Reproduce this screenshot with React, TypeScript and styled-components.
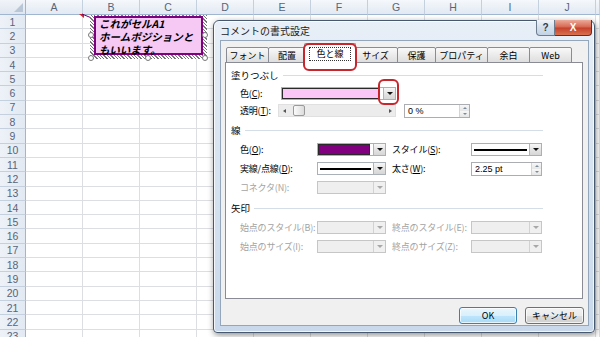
import React from 'react';
import styled, { createGlobalStyle } from 'styled-components';

const GlobalStyle = createGlobalStyle`
  *, *::before, *::after { box-sizing: border-box; }
  html, body { margin: 0; padding: 0; background: #fff; }
  body { font-family: "Noto Sans CJK JP", "Noto Sans", sans-serif; }
`;

const UI_FONT = `"Noto Sans CJK JP", "Noto Sans", sans-serif`;
const COLS = ['A', 'B', 'C', 'D', 'E', 'F', 'G', 'H', 'I', 'J', ''];
const ROWS = Array.from({ length: 23 }, (_, i) => i + 1);

// ---------- spreadsheet ----------
const Screen = styled.div`
  position: relative;
  width: 600px;
  height: 337px;
  overflow: hidden;
  background: #fff;
`;

const Sheet = styled.div`
  display: grid;
  grid-template-columns: 26px repeat(10, 57px) 1fr;
  grid-template-rows: 15px repeat(23, 14.3px);
  width: 600px;
`;

const Corner = styled.div`
  position: relative;
  background: linear-gradient(#f1f4f9, #dfe6ef);
  border-right: 1px solid #9eb6ce;
  border-bottom: 1px solid #9eb6ce;
  &::after {
    content: '';
    position: absolute;
    right: 2px;
    bottom: 2px;
    border-left: 9px solid transparent;
    border-bottom: 9px solid #b9c6d6;
  }
`;

const ColHead = styled.div`
  display: flex;
  align-items: center;
  justify-content: center;
  background: linear-gradient(#f5f8fc, #e2e9f2);
  border-right: 1px solid #c4d0de;
  border-bottom: 1px solid #9eb6ce;
  font: 10.5px "Liberation Sans", Arial, sans-serif;
  color: #56657a;
`;

const RowHead = styled.div`
  display: flex;
  align-items: center;
  justify-content: center;
  background: linear-gradient(90deg, #eef2f8, #e2e9f2);
  border-right: 1px solid #9eb6ce;
  border-bottom: 1px solid #c4d0de;
  font: 10.5px "Liberation Sans", Arial, sans-serif;
  color: #56657a;
`;

const Cell = styled.div`
  border-right: 1px solid #dcdee2;
  border-bottom: 1px solid #dcdee2;
`;

// ---------- comment ----------
const CommentFrame = styled.div`
  position: absolute;
  left: 90px;
  top: 15px;
  width: 117px;
  height: 44px;
  padding: 1px 4px 4px 4px;
  background: repeating-linear-gradient(45deg, #777 0 1px, #fff 1px 2.4px);
`;

const Note = styled.div`
  height: 100%;
  background: #f6c8f4;
  border: 2.5px solid #7d007d;
  padding: 0 0 0 3px;
  font: italic bold 10.5px/13px ${UI_FONT};
  color: #000;
  white-space: nowrap;
`;

const NoteText = styled.div`
  margin-top: -1px;
`;

const Handle = styled.span<{ $x: number; $y: number }>`
  position: absolute;
  left: ${p => p.$x - 3}px;
  top: ${p => p.$y - 3}px;
  width: 6px;
  height: 6px;
  border-radius: 50%;
  background: #fff;
  border: 1px solid #777;
`;

const Indicator = styled.svg`
  position: absolute;
  left: 78px;
  top: 13px;
`;

// ---------- dialog ----------
const Dialog = styled.div`
  position: absolute;
  left: 213px;
  top: 20px;
  width: 382px;
  height: 313px;
  display: flex;
  flex-direction: column;
  padding: 0 5px 6px 6px;
  border: 1px solid #47596e;
  border-radius: 6px 6px 4px 4px;
  background: linear-gradient(180deg, #e8eff7 0%, #dae5f1 35%, #c9d9eb 100%);
  box-shadow: 1px 2px 6px rgba(0, 0, 0, 0.45), inset 0 0 0 1px rgba(255, 255, 255, 0.75);
`;

const TitleBar = styled.div`
  display: flex;
  align-items: center;
  height: 19px;
  font: 10px ${UI_FONT};
  color: #1b1b1b;
`;

const Caption = styled.div`
  display: flex;
  align-self: flex-start;
  margin: -1px -3px 0 auto;
`;

const HelpBtn = styled.div`
  width: 19px;
  height: 16px;
  display: flex;
  align-items: center;
  justify-content: center;
  border: 1px solid #6d7d90;
  border-top: none;
  border-radius: 0 0 0 4px;
  background: linear-gradient(#f1f5fa, #d3dfec 50%, #c3d3e6);
  font: bold 10px "Liberation Sans", Arial, sans-serif;
  color: #2e3b4c;
`;

const CloseBtn = styled.div`
  width: 37px;
  height: 16px;
  display: flex;
  align-items: center;
  justify-content: center;
  border: 1px solid #6b2a22;
  border-top: none;
  border-left: none;
  border-radius: 0 0 4px 0;
  background: linear-gradient(#ecaa9a, #d6664f 48%, #c4402b 52%, #d9714f);
  font: bold 10px "Liberation Sans", Arial, sans-serif;
  color: #fff;
`;

const Client = styled.div`
  flex: 1;
  display: flex;
  flex-direction: column;
  padding: 2px 5px 0 4px;
  background: #f0f0f0;
  border: 1px solid #93a6bb;
`;

const TabStrip = styled.div`
  display: flex;
  align-items: flex-end;
  height: 20px;
  margin-left: 1px;
`;

const Tab = styled.div<{ $w: number; $active?: boolean }>`
  position: relative;
  z-index: ${p => (p.$active ? 3 : 2)};
  display: flex;
  align-items: center;
  justify-content: center;
  width: ${p => p.$w}px;
  height: ${p => (p.$active ? 20 : 16)}px;
  margin-left: ${p => (p.$active ? -2 : -1)}px;
  margin-right: ${p => (p.$active ? -2 : 0)}px;
  border: 1px solid #898c95;
  border-bottom: ${p => (p.$active ? 'none' : '1px solid #898c95')};
  border-radius: 2px 2px 0 0;
  background: ${p => (p.$active ? '#fff' : 'linear-gradient(#f9f9f9, #ebebeb 50%, #dedede)')};
  font: 9px ${UI_FONT};
  color: #000;
  &:first-child { margin-left: 0; }
`;

const FocusText = styled.span`
  padding: 0 6px;
  outline: 1px dotted #333;
  line-height: 12px;
`;

const RedMark = styled.span<{ $l: number; $t: number; $r: number; $b: number }>`
  position: absolute;
  left: ${p => p.$l}px;
  top: ${p => p.$t}px;
  right: ${p => p.$r}px;
  bottom: ${p => p.$b}px;
  border: 2px solid #c8262d;
  border-radius: 6px;
  pointer-events: none;
  z-index: 5;
`;

const Panel = styled.div`
  position: relative;
  z-index: 1;
  height: 237px;
  margin-top: -1px;
  background: #fff;
  border: 1px solid #898c95;
  padding: 5px 0 0 5px;
  font: 9px ${UI_FONT};
  color: #000;
`;

const SectionHead = styled.div<{ $mt?: number }>`
  display: flex;
  align-items: center;
  gap: 4px;
  width: 312px;
  height: 14px;
  margin-top: ${p => p.$mt ?? 0}px;
  font-size: 9.5px;
  &::after {
    content: '';
    flex: 1;
    height: 1px;
    background: #d5dde6;
  }
`;

const FillRow = styled.div<{ $mt?: number }>`
  display: grid;
  grid-template-columns: 41px 115px 8px 66px;
  align-items: center;
  height: 17px;
  margin: ${p => p.$mt ?? 0}px 0 0 9px;
`;

const LineRow = styled.div<{ $mt?: number }>`
  display: grid;
  grid-template-columns: 77px 69px 85px 71px;
  align-items: center;
  height: 19px;
  margin: ${p => p.$mt ?? 0}px 0 0 9px;
`;

const Label = styled.span<{ $disabled?: boolean; $pad?: number }>`
  white-space: nowrap;
  padding-left: ${p => p.$pad ?? 0}px;
  letter-spacing: -0.2px;
  color: ${p => (p.$disabled ? '#a3a3a3' : '#000')};
`;

const Combo = styled.div<{ $disabled?: boolean }>`
  display: flex;
  height: 13px;
  border: 1px solid ${p => (p.$disabled ? '#c6c6c6' : '#a9b0b8')};
  background: ${p => (p.$disabled ? '#efefef' : '#fff')};
`;

const Swatch = styled.div<{ $color: string }>`
  flex: 1;
  margin: 0 3px 0 0;
  background: ${p => p.$color};
  border: 1px solid #2a2a2a;
`;

const LineSample = styled.div`
  flex: 1;
  display: flex;
  align-items: center;
  padding: 0 2px;
  &::before {
    content: '';
    flex: 1;
    height: 2px;
    background: #000;
  }
`;

const DropBtn = styled.div<{ $disabled?: boolean }>`
  position: relative;
  display: flex;
  align-items: center;
  justify-content: center;
  width: 12px;
  margin-left: auto;
  border-left: 1px solid ${p => (p.$disabled ? '#d2d2d2' : '#b4b4b4')};
  background: ${p => (p.$disabled ? '#f0f0f0' : 'linear-gradient(#f7f7f7, #e4e4e4 50%, #d6d6d6)')};
  &::before {
    content: '';
    border-left: 3px solid transparent;
    border-right: 3px solid transparent;
    border-top: 3px solid ${p => (p.$disabled ? '#a8a8a8' : '#111')};
  }
`;

const Slider = styled.div`
  display: flex;
  align-items: center;
  height: 13px;
  margin-left: -3px;
  background: #ececec;
  border: 1px solid #e0e0e0;
`;

const SlideArrow = styled.span<{ $dir: 'l' | 'r' }>`
  width: 10px;
  display: flex;
  justify-content: center;
  &::before {
    content: '';
    border-top: 2.5px solid transparent;
    border-bottom: 2.5px solid transparent;
    ${p => (p.$dir === 'l' ? 'border-right: 3px solid #555;' : 'border-left: 3px solid #555;')}
  }
`;

const Thumb = styled.span`
  width: 12px;
  height: 11px;
  margin-left: 4px;
  border: 1px solid #9a9a9a;
  border-radius: 2px;
  background: linear-gradient(90deg, #fafafa, #dcdcdc);
`;

const Track = styled.span`
  flex: 1;
`;

const Spin = styled.div`
  display: flex;
  height: 14px;
  border: 1px solid #abadb3;
  background: #fff;
  font: 9px "Liberation Sans", Arial, sans-serif;
`;

const SpinText = styled.span`
  flex: 1;
  padding-left: 3px;
  line-height: 12px;
`;

const SpinBtns = styled.div`
  display: flex;
  flex-direction: column;
  width: 10px;
  border-left: 1px solid #d4d4d4;
`;

const SpinHalf = styled.span<{ $up?: boolean }>`
  flex: 1;
  display: flex;
  align-items: center;
  justify-content: center;
  background: linear-gradient(#f7f7f7, #e6e6e6);
  &::before {
    content: '';
    border-left: 2.5px solid transparent;
    border-right: 2.5px solid transparent;
    ${p => (p.$up ? 'border-bottom: 2px solid #7a8a9a;' : 'border-top: 2px solid #7a8a9a;')}
  }
`;

const ButtonRow = styled.div`
  display: flex;
  justify-content: flex-end;
  gap: 8px;
  margin: 8px -1px 0 0;
`;

const Button = styled.div<{ $default?: boolean }>`
  display: flex;
  align-items: center;
  justify-content: center;
  width: ${p => (p.$default ? 58 : 59)}px;
  height: 17px;
  border: 1px solid ${p => (p.$default ? '#3c7fb1' : '#707070')};
  border-radius: 3px;
  background: ${p =>
    p.$default
      ? 'linear-gradient(#eaf6fd, #d9f0fc 50%, #bee6fd 51%, #a7d9f5)'
      : 'linear-gradient(#f2f2f2, #ebebeb 50%, #dddddd 51%, #cfcfcf)'};
  box-shadow: inset 0 0 0 1px rgba(255, 255, 255, 0.7);
  font: 9px ${UI_FONT};
  color: #000;
`;

const TABS = [
  { label: 'フォント', w: 43 },
  { label: '配置', w: 38 },
  { label: '色と線', w: 52, active: true },
  { label: 'サイズ', w: 45 },
  { label: '保護', w: 39 },
  { label: 'プロパティ', w: 53 },
  { label: '余白', w: 43 },
  { label: 'Web', w: 43 },
];

const NOTE_LINES = ['これがセルA1', 'ホームポジションと', 'もいいます。'];

const App: React.FC = () => {
  return (
    <Screen>
      <GlobalStyle />
      <Sheet>
        <Corner />
        {COLS.map((c, i) => (
          <ColHead key={`h${i}`}>{c}</ColHead>
        ))}
        {ROWS.map(r => (
          <React.Fragment key={r}>
            <RowHead>{r}</RowHead>
            {COLS.map((_, i) => (
              <Cell key={i} />
            ))}
          </React.Fragment>
        ))}
      </Sheet>

      {/* comment indicator and note */}
      <Indicator width="18" height="8" viewBox="0 0 18 8">
        <polygon points="1,1 6,1 6,5" fill="#d02020" />
        <line x1="4" y1="1" x2="16" y2="6" stroke="#6a006a" strokeWidth="1" />
      </Indicator>
      <CommentFrame>
        <Note>
          <NoteText>
            {NOTE_LINES.map(l => (
              <div key={l}>{l}</div>
            ))}
          </NoteText>
        </Note>
        <Handle $x={1} $y={20} />
        <Handle $x={115} $y={20} />
        <Handle $x={1} $y={43} />
        <Handle $x={58} $y={43} />
        <Handle $x={115} $y={43} />
      </CommentFrame>

      <Dialog>
        <TitleBar>
          コメントの書式設定
          <Caption>
            <HelpBtn>?</HelpBtn>
            <CloseBtn>X</CloseBtn>
          </Caption>
        </TitleBar>
        <Client>
          <TabStrip>
            {TABS.map(t => (
              <Tab key={t.label} $w={t.w} $active={t.active}>
                {t.active ? <FocusText>{t.label}</FocusText> : t.label}
                {t.active && <RedMark $l={-2} $t={-1} $r={-2} $b={-8} />}
              </Tab>
            ))}
          </TabStrip>
          <Panel>
            <SectionHead>塗りつぶし</SectionHead>
            <FillRow $mt={3}>
              <Label>
                色(<u>C</u>):
              </Label>
              <Combo>
                <Swatch $color="#f9c6f6" />
                <DropBtn>
                  <RedMark $l={-6} $t={-9} $r={-4} $b={-6} />
                </DropBtn>
              </Combo>
            </FillRow>
            <FillRow>
              <Label>
                透明(<u>T</u>):
              </Label>
              <Slider>
                <SlideArrow $dir="l" />
                <Thumb />
                <Track />
                <SlideArrow $dir="r" />
              </Slider>
              <span />
              <Spin>
                <SpinText>0 %</SpinText>
                <SpinBtns>
                  <SpinHalf $up />
                  <SpinHalf />
                </SpinBtns>
              </Spin>
            </FillRow>

            <SectionHead $mt={4}>線</SectionHead>
            <LineRow $mt={3}>
              <Label>
                色(<u>O</u>):
              </Label>
              <Combo>
                <Swatch $color="#800080" />
                <DropBtn />
              </Combo>
              <Label $pad={6}>
                スタイル(<u>S</u>):
              </Label>
              <Combo>
                <LineSample />
                <DropBtn />
              </Combo>
            </LineRow>
            <LineRow>
              <Label>
                実線/点線(<u>D</u>):
              </Label>
              <Combo>
                <LineSample />
                <DropBtn />
              </Combo>
              <Label $pad={6}>
                太さ(<u>W</u>):
              </Label>
              <Spin>
                <SpinText>2.25 pt</SpinText>
                <SpinBtns>
                  <SpinHalf $up />
                  <SpinHalf />
                </SpinBtns>
              </Spin>
            </LineRow>
            <LineRow>
              <Label $disabled>コネクタ(N):</Label>
              <Combo $disabled>
                <DropBtn $disabled />
              </Combo>
            </LineRow>

            <SectionHead $mt={4}>矢印</SectionHead>
            <LineRow $mt={3}>
              <Label $disabled>始点のスタイル(B):</Label>
              <Combo $disabled>
                <DropBtn $disabled />
              </Combo>
              <Label $disabled $pad={6}>
                終点のスタイル(E):
              </Label>
              <Combo $disabled>
                <DropBtn $disabled />
              </Combo>
            </LineRow>
            <LineRow>
              <Label $disabled>始点のサイズ(I):</Label>
              <Combo $disabled>
                <DropBtn $disabled />
              </Combo>
              <Label $disabled $pad={6}>
                終点のサイズ(Z):
              </Label>
              <Combo $disabled>
                <DropBtn $disabled />
              </Combo>
            </LineRow>
          </Panel>
          <ButtonRow>
            <Button $default>OK</Button>
            <Button>キャンセル</Button>
          </ButtonRow>
        </Client>
      </Dialog>
    </Screen>
  );
};

export default App;
